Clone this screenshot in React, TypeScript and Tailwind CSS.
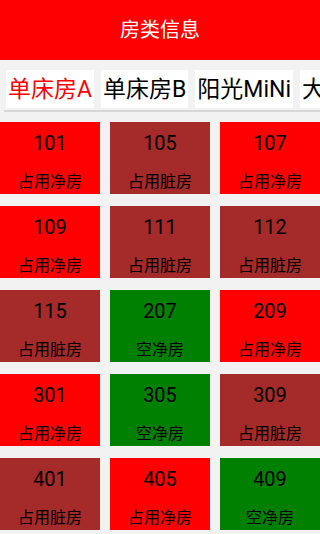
import React from "react";

type Room = { no: string; status: string; color: string };

const rooms: Room[] = [
  { no: "101", status: "占用净房", color: "bg-[#ff0000]" },
  { no: "105", status: "占用脏房", color: "bg-[#a52a2a]" },
  { no: "107", status: "占用净房", color: "bg-[#ff0000]" },
  { no: "109", status: "占用净房", color: "bg-[#ff0000]" },
  { no: "111", status: "占用脏房", color: "bg-[#a52a2a]" },
  { no: "112", status: "占用脏房", color: "bg-[#a52a2a]" },
  { no: "115", status: "占用脏房", color: "bg-[#a52a2a]" },
  { no: "207", status: "空净房", color: "bg-[#008000]" },
  { no: "209", status: "占用净房", color: "bg-[#ff0000]" },
  { no: "301", status: "占用净房", color: "bg-[#ff0000]" },
  { no: "305", status: "空净房", color: "bg-[#008000]" },
  { no: "309", status: "占用脏房", color: "bg-[#a52a2a]" },
  { no: "401", status: "占用脏房", color: "bg-[#a52a2a]" },
  { no: "405", status: "占用净房", color: "bg-[#ff0000]" },
  { no: "409", status: "空净房", color: "bg-[#008000]" },
];

const tabs = ["单床房A", "单床房B", "阳光MiNi", "大床房"];

export default function App() {
  return (
    <div
      className="w-[320px] h-[534px] overflow-hidden bg-[#f2f2f2]"
      style={{ fontFamily: 'Roboto, "Noto Sans CJK SC", sans-serif' }}
    >
      <div className="h-[60px] bg-[#ff0000] flex items-center justify-center text-white text-[20px] leading-none">
        房类信息
      </div>
      <div className="pt-[10px] pl-[4px]">
        <div className="flex gap-[7px] pl-[2px] whitespace-nowrap overflow-hidden">
          {tabs.map((t, i) => (
            <div
              key={t}
              className={`h-[38px] shrink-0 bg-white px-[2px] flex items-center text-[23px] leading-none ${
                i === 0 ? "text-[#ff0000]" : "text-black"
              }`}
            >
              {t}
            </div>
          ))}
        </div>
        <div className="mt-[2px] h-[2px] bg-[#d6d6d6]" />
      </div>
      <div className="mt-[10px] grid grid-cols-[100px_100px_100px] gap-x-[10px] gap-y-[12px]">
        {rooms.map((r) => (
          <div
            key={r.no}
            className={`${r.color} h-[72px] flex flex-col items-center text-black`}
          >
            <div className="mt-[11px] text-[20px] leading-[20px]">{r.no}</div>
            <div className="mt-[21px] text-[16px] leading-[16px]">{r.status}</div>
          </div>
        ))}
      </div>
    </div>
  );
}
